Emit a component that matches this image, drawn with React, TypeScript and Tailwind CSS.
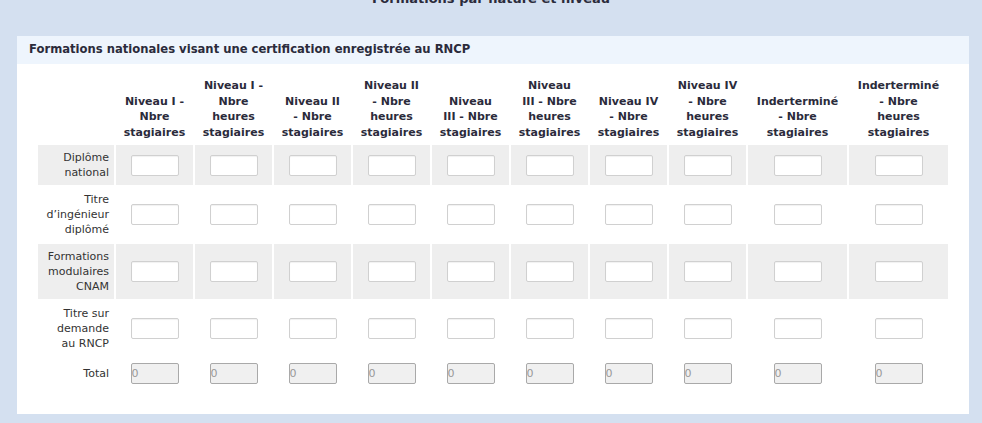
import React from "react";

const headers: string[][] = [
  ["Niveau I -", "Nbre", "stagiaires"],
  ["Niveau I -", "Nbre", "heures", "stagiaires"],
  ["Niveau II", "- Nbre", "stagiaires"],
  ["Niveau II", "- Nbre", "heures", "stagiaires"],
  ["Niveau", "III - Nbre", "stagiaires"],
  ["Niveau", "III - Nbre", "heures", "stagiaires"],
  ["Niveau IV", "- Nbre", "stagiaires"],
  ["Niveau IV", "- Nbre", "heures", "stagiaires"],
  ["Inderterminé", "- Nbre", "stagiaires"],
  ["Inderterminé", "- Nbre", "heures", "stagiaires"],
];

const rows: { label: string[]; grey: boolean }[] = [
  { label: ["Diplôme", "national"], grey: true },
  { label: ["Titre", "d’ingénieur", "diplômé"], grey: false },
  { label: ["Formations", "modulaires", "CNAM"], grey: true },
  { label: ["Titre sur", "demande", "au RNCP"], grey: false },
];

const colWidths = ["w-[77px]", "w-[77px]", "w-[77px]", "w-[77px]", "w-[77px]", "w-[77px]", "w-[77px]", "w-[77px]", "w-[99px]", "w-[99px]"];

function Lines({ lines }: { lines: string[] }) {
  return (
    <>
      {lines.map((l, i) => (
        <React.Fragment key={i}>
          {i > 0 && <br />}
          {l}
        </React.Fragment>
      ))}
    </>
  );
}

export default function App() {
  return (
    <div className="min-h-screen bg-[#d4e0f0] pb-[10px] font-['DejaVu_Sans',Verdana,sans-serif] text-[#333]">
      <h2 className="-mt-[9px] h-[45px] text-center text-[13px] font-bold leading-[16px] text-[#2b2b3b]">
        Formations par nature et niveau
      </h2>

      <div className="mx-[17px] w-[952px] bg-white">
        <div className="flex h-[28px] items-center bg-[#eef5fd] px-[12px]">
          <h3 className="text-[11.6px] font-bold text-[#2b2b3b]">
            Formations nationales visant une certification enregistrée au RNCP
          </h3>
        </div>

        <div className="px-[19px] pb-[23px] pt-[12px]">
          <table className="w-[914px] table-fixed border-separate border-spacing-[2px] text-[11px] leading-[15.5px]">
            <thead>
              <tr>
                <th className="w-[76px]"></th>
                {headers.map((h, i) => (
                  <th
                    key={i}
                    className={`${colWidths[i]} px-0 pb-[3px] align-bottom text-center font-bold text-[#2b2b3b]`}
                  >
                    <Lines lines={h} />
                  </th>
                ))}
              </tr>
            </thead>
            <tbody>
              {rows.map((r, ri) => (
                <tr key={ri} className={r.grey ? "bg-[#eeeeee]" : "bg-white"}>
                  <td className="py-[5px] pr-[5px] text-right align-middle leading-[15px]">
                    <Lines lines={r.label} />
                  </td>
                  {headers.map((_, ci) => (
                    <td key={ci} className="py-[5px] text-center align-middle">
                      <input
                        type="text"
                        className="h-[21px] w-[48px] rounded-[2px] border border-[#d0d0d0] bg-white px-[2px] text-[11px] shadow-[inset_0_1px_1px_rgba(0,0,0,0.06)] outline-none"
                      />
                    </td>
                  ))}
                </tr>
              ))}
              <tr>
                <td className="py-[5px] pr-[5px] text-right align-middle">Total</td>
                {headers.map((_, ci) => (
                  <td key={ci} className="py-[5px] text-center align-middle">
                    <input
                      type="text"
                      readOnly
                      value="0"
                      className="h-[21px] w-[48px] rounded-[2px] border border-[#a9a9a9] bg-[#f0f0f0] px-0 text-[11px] text-[#999] outline-none"
                    />
                  </td>
                ))}
              </tr>
            </tbody>
          </table>
        </div>
      </div>
    </div>
  );
}
